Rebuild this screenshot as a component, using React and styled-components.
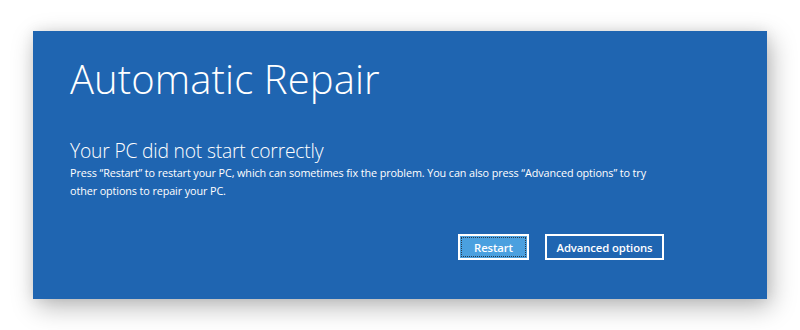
import React from 'react';
import styled, { createGlobalStyle } from 'styled-components';

const GlobalStyle = createGlobalStyle`
  html, body {
    margin: 0;
    padding: 0;
    background: #fff;
  }
  body {
    width: 800px;
    height: 330px;
    overflow: hidden;
    font-family: "Open Sans", "Noto Sans", "Liberation Sans", sans-serif;
  }
`;

const Page = styled.div`
  width: 800px;
  height: 330px;
  box-sizing: border-box;
  padding: 31px 33px;
`;

const Screen = styled.section`
  width: 734px;
  height: 268px;
  box-sizing: border-box;
  background: #1f65b1;
  color: #fff;
  padding: 24px 37px 0 37px;
  display: flex;
  flex-direction: column;
  box-shadow: 4px 8px 24px rgba(0, 0, 0, 0.28), 0 0 12px rgba(0, 0, 0, 0.08);
`;

const Title = styled.h1`
  margin: 0;
  font-weight: 300;
  font-size: 40px;
  line-height: 48px;
  letter-spacing: 0.1px;
`;

const Subtitle = styled.h2`
  margin: 35px 0 0 0;
  font-weight: 300;
  font-size: 19.3px;
  line-height: 26px;
  letter-spacing: -0.2px;
`;

const Message = styled.p`
  margin: 0;
  font-size: 10.8px;
  line-height: 18px;
  width: 600px;
  letter-spacing: -0.1px;
`;

const Actions = styled.div`
  display: flex;
  justify-content: flex-end;
  gap: 16px;
  margin-top: 34px;
  padding-right: 66px;
`;

const Button = styled.button`
  width: ${p => p.$width}px;
  height: 26px;
  box-sizing: border-box;
  padding: 0;
  font-family: inherit;
  font-weight: 600;
  font-size: 11.3px;
  letter-spacing: -0.1px;
  color: #fff;
  background: ${p => (p.$focused ? '#4aa0df' : '#1f65b1')};
  border: 2px solid #fff;
  outline: ${p => (p.$focused ? '1px dotted #2a3a4a' : 'none')};
  outline-offset: -4px;
  cursor: pointer;
`;

export default function App() {
  return (
    <Page>
      <GlobalStyle />
      <Screen>
        <Title>Automatic Repair</Title>
        <Subtitle>Your PC did not start correctly</Subtitle>
        <Message>
          Press “Restart” to restart your PC, which can sometimes fix the problem. You can also press “Advanced options” to try
          other options to repair your PC.
        </Message>
        <Actions>
          <Button $focused $width={71}>Restart</Button>
          <Button $width={119}>Advanced options</Button>
        </Actions>
      </Screen>
    </Page>
  );
}
